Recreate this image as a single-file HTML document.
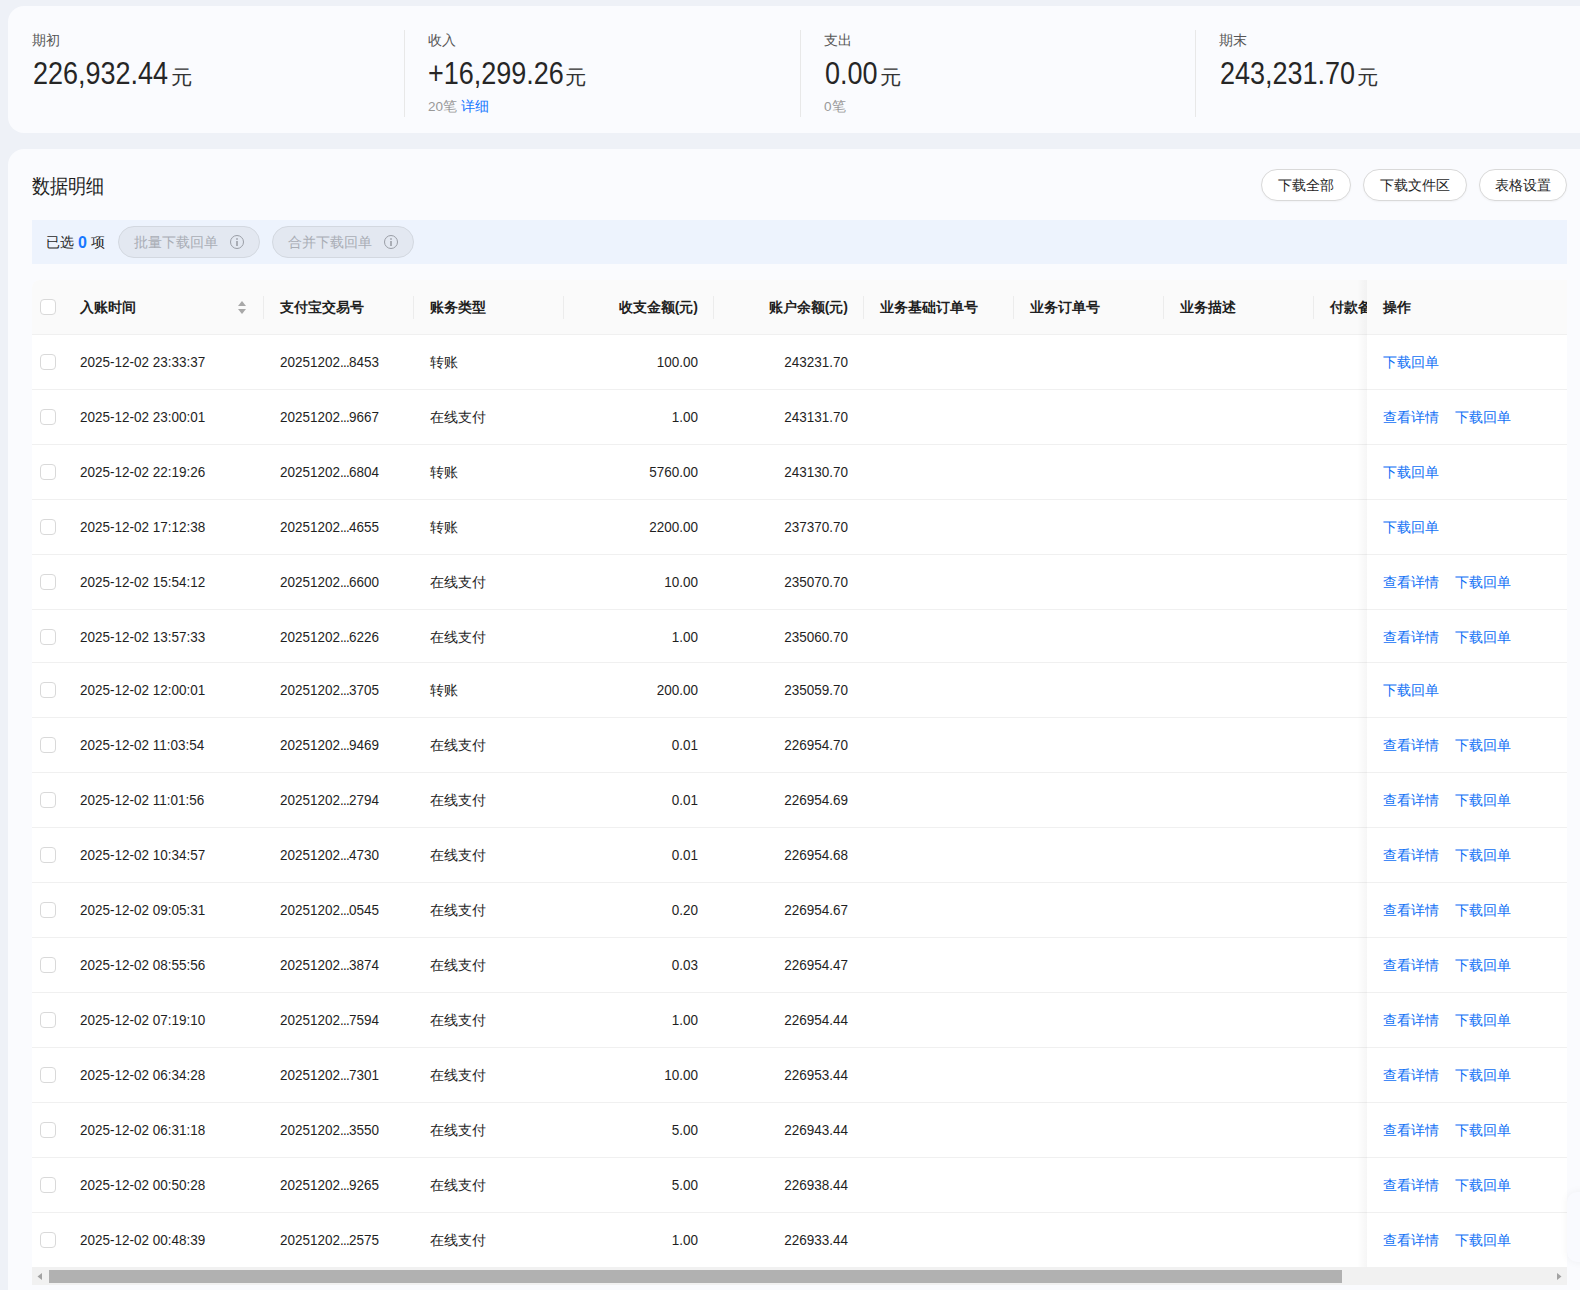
<!DOCTYPE html><html><head><meta charset="utf-8"><title>数据明细</title><style>
*{margin:0;padding:0;box-sizing:border-box}
html,body{width:1580px;height:1290px;overflow:hidden}
body{background:#eef1f7;font-family:"Liberation Sans",sans-serif;color:#1f1f1f;position:relative}
.abs{position:absolute}
.card{position:absolute;background:#fafbfe;border-radius:16px}
.lbl{position:absolute;font-size:13.5px;color:#555;line-height:16px;white-space:nowrap}
.num{position:absolute;font-size:31px;line-height:30px;color:#262626;white-space:nowrap;transform:scaleX(0.871);transform-origin:0 0}
.yuan{position:absolute;font-size:20px;line-height:20px;color:#333;transform:scaleX(1.07);transform-origin:0 0}
.sub{position:absolute;font-size:13.5px;line-height:16px;color:#999;white-space:nowrap}
.sub b{font-weight:normal;color:#1677ff}
.vdiv{position:absolute;width:1px;background:#e8e8e8;top:30px;height:87px}
.btn{position:absolute;top:169px;height:32px;border:1px solid #d9d9d9;border-radius:16px;background:#fff;font-size:14px;line-height:30px;text-align:center;color:#1f1f1f;box-shadow:0 1px 2px rgba(0,0,0,0.04)}
.selbar{position:absolute;left:32px;top:220px;width:1535px;height:44px;background:#edf3fd}
.pill{position:absolute;top:226px;height:32px;border:1px solid #d3d8e0;border-radius:16px;background:#e3e8f1;font-size:14px;line-height:30px;color:#a9adb5;padding-left:15px;white-space:nowrap}
.info{position:absolute;top:8px;width:14px;height:14px;border:1.3px solid #9a9ea6;border-radius:50%}
.info:before{content:"";position:absolute;left:5.2px;top:2.2px;width:1.6px;height:1.6px;background:#a9adb5;border-radius:1px}
.info:after{content:"";position:absolute;left:5.2px;top:5px;width:1.6px;height:5px;background:#a9adb5}
.tbl{position:absolute;left:32px;top:280px;width:1535px;height:987px;background:#fff;border-radius:8px 0 0 0;overflow:hidden}
.th{position:absolute;left:0;top:0;width:1535px;height:55px;background:#fafafa;border-bottom:1px solid #f0f0f0}
.hd{position:absolute;top:19px;font-size:14px;line-height:16px;font-weight:bold;color:#1f1f1f;white-space:nowrap}
.sep{position:absolute;top:16px;width:1px;height:23px;background:#ececec}
.rl{position:absolute;left:0;width:1535px;height:1px;background:#f0f0f0}
.cb{position:absolute;left:8px;width:16px;height:16px;border:1px solid #d9d9d9;border-radius:4px;background:#fff}
.td{position:absolute;font-size:13.5px;line-height:16px;margin-top:0.5px;transform:scaleY(1.07);transform-origin:0 3px;color:#1f1f1f;white-space:nowrap}
.tdc{position:absolute;font-size:14px;line-height:16px;color:#1f1f1f;white-space:nowrap}
.r{text-align:right}
.op{position:absolute;font-size:14px;line-height:16px;color:#0f6ff5;white-space:nowrap}
.fix{position:absolute;left:1335px;top:0;width:200px;height:987px}
.shadow{position:absolute;left:1325px;top:0;width:10px;height:987px;background:linear-gradient(to right,rgba(0,0,0,0),rgba(0,0,0,0.035))}
.sb{position:absolute;left:32px;top:1267px;width:1535px;height:18px;background:#f1f1f1}
.thumb{position:absolute;left:17px;top:3px;width:1293px;height:13px;background:#b1b1b1}
</style></head><body>
<div class="card" style="left:8px;top:6px;width:1586px;height:127px"></div>
<div class="lbl" style="left:32px;top:33px">期初</div>
<div class="num" style="left:32.5px;top:59px">226,932.44</div>
<div class="yuan" style="left:171px;top:67px">元</div>
<div class="vdiv" style="left:404px"></div>
<div class="lbl" style="left:428px;top:33px">收入</div>
<div class="num" style="left:427.5px;top:59px">+16,299.26</div>
<div class="yuan" style="left:565px;top:67px">元</div>
<div class="sub" style="left:428px;top:99px">20笔 <b>详细</b></div>
<div class="vdiv" style="left:800px"></div>
<div class="lbl" style="left:824px;top:33px">支出</div>
<div class="num" style="left:824.5px;top:59px">0.00</div>
<div class="yuan" style="left:880px;top:67px">元</div>
<div class="sub" style="left:824px;top:99px">0笔</div>
<div class="vdiv" style="left:1195px"></div>
<div class="lbl" style="left:1219px;top:33px">期末</div>
<div class="num" style="left:1219.5px;top:59px">243,231.70</div>
<div class="yuan" style="left:1357px;top:67px">元</div>
<div class="card" style="left:8px;top:149px;width:1586px;height:1160px"></div>
<div class="abs" style="left:32px;top:175px;font-size:18px;line-height:20px;color:#1f1f1f;transform:scaleY(1.1);transform-origin:0 0">数据明细</div>
<div class="btn" style="left:1261px;width:90px">下载全部</div>
<div class="btn" style="left:1363px;width:104px">下载文件区</div>
<div class="btn" style="left:1479px;width:88px">表格设置</div>
<div class="selbar"></div>
<div class="abs" style="left:46px;top:234px;font-size:14px;line-height:16px;color:#1f1f1f;white-space:nowrap">已选 <span style="color:#1677ff;font-weight:bold;font-size:16px;position:relative;top:0.5px">0</span> 项</div>
<div class="pill" style="left:118px;width:142px">批量下载回单<span class="info" style="left:111px"></span></div>
<div class="pill" style="left:272px;width:142px">合并下载回单<span class="info" style="left:111px"></span></div>
<div class="tbl">
<div class="th">
<div class="cb" style="top:19px"></div>
<div class="hd" style="left:48px">入账时间</div>
<svg class="abs" style="left:206px;top:20px" width="9" height="15" viewBox="0 0 9 15"><path d="M4 1L8 6H0Z" fill="#a8a8a8"/><path d="M4 14L8 9H0Z" fill="#a8a8a8"/></svg>
<div class="sep" style="left:231px"></div>
<div class="sep" style="left:381px"></div>
<div class="sep" style="left:531px"></div>
<div class="sep" style="left:681px"></div>
<div class="sep" style="left:831px"></div>
<div class="sep" style="left:981px"></div>
<div class="sep" style="left:1131px"></div>
<div class="sep" style="left:1281px"></div>
<div class="hd" style="left:248px">支付宝交易号</div>
<div class="hd" style="left:398px">账务类型</div>
<div class="hd r" style="left:516px;width:150px">收支金额(元)</div>
<div class="hd r" style="left:666px;width:150px">账户余额(元)</div>
<div class="hd" style="left:848px">业务基础订单号</div>
<div class="hd" style="left:998px">业务订单号</div>
<div class="hd" style="left:1148px">业务描述</div>
<div class="hd" style="left:1298px">付款备注</div>
</div>
<div class="cb" style="top:74px"></div>
<div class="td" style="left:48px;top:73.5px">2025-12-02 23:33:37</div>
<div class="td" style="left:248px;top:73.5px">20251202<span style="letter-spacing:-0.8px">...</span>8453</div>
<div class="tdc" style="left:398px;top:73.5px">转账</div>
<div class="td r" style="left:516px;width:150px;top:73.5px">100.00</div>
<div class="td r" style="left:666px;width:150px;top:73.5px">243231.70</div>
<div class="rl" style="top:109px"></div>
<div class="cb" style="top:129px"></div>
<div class="td" style="left:48px;top:128.5px">2025-12-02 23:00:01</div>
<div class="td" style="left:248px;top:128.5px">20251202<span style="letter-spacing:-0.8px">...</span>9667</div>
<div class="tdc" style="left:398px;top:128.5px">在线支付</div>
<div class="td r" style="left:516px;width:150px;top:128.5px">1.00</div>
<div class="td r" style="left:666px;width:150px;top:128.5px">243131.70</div>
<div class="rl" style="top:164px"></div>
<div class="cb" style="top:184px"></div>
<div class="td" style="left:48px;top:183.5px">2025-12-02 22:19:26</div>
<div class="td" style="left:248px;top:183.5px">20251202<span style="letter-spacing:-0.8px">...</span>6804</div>
<div class="tdc" style="left:398px;top:183.5px">转账</div>
<div class="td r" style="left:516px;width:150px;top:183.5px">5760.00</div>
<div class="td r" style="left:666px;width:150px;top:183.5px">243130.70</div>
<div class="rl" style="top:219px"></div>
<div class="cb" style="top:239px"></div>
<div class="td" style="left:48px;top:238.5px">2025-12-02 17:12:38</div>
<div class="td" style="left:248px;top:238.5px">20251202<span style="letter-spacing:-0.8px">...</span>4655</div>
<div class="tdc" style="left:398px;top:238.5px">转账</div>
<div class="td r" style="left:516px;width:150px;top:238.5px">2200.00</div>
<div class="td r" style="left:666px;width:150px;top:238.5px">237370.70</div>
<div class="rl" style="top:274px"></div>
<div class="cb" style="top:294px"></div>
<div class="td" style="left:48px;top:293.5px">2025-12-02 15:54:12</div>
<div class="td" style="left:248px;top:293.5px">20251202<span style="letter-spacing:-0.8px">...</span>6600</div>
<div class="tdc" style="left:398px;top:293.5px">在线支付</div>
<div class="td r" style="left:516px;width:150px;top:293.5px">10.00</div>
<div class="td r" style="left:666px;width:150px;top:293.5px">235070.70</div>
<div class="rl" style="top:329px"></div>
<div class="cb" style="top:349px"></div>
<div class="td" style="left:48px;top:348.5px">2025-12-02 13:57:33</div>
<div class="td" style="left:248px;top:348.5px">20251202<span style="letter-spacing:-0.8px">...</span>6226</div>
<div class="tdc" style="left:398px;top:348.5px">在线支付</div>
<div class="td r" style="left:516px;width:150px;top:348.5px">1.00</div>
<div class="td r" style="left:666px;width:150px;top:348.5px">235060.70</div>
<div class="rl" style="top:382px"></div>
<div class="cb" style="top:402px"></div>
<div class="td" style="left:48px;top:401.5px">2025-12-02 12:00:01</div>
<div class="td" style="left:248px;top:401.5px">20251202<span style="letter-spacing:-0.8px">...</span>3705</div>
<div class="tdc" style="left:398px;top:401.5px">转账</div>
<div class="td r" style="left:516px;width:150px;top:401.5px">200.00</div>
<div class="td r" style="left:666px;width:150px;top:401.5px">235059.70</div>
<div class="rl" style="top:437px"></div>
<div class="cb" style="top:457px"></div>
<div class="td" style="left:48px;top:456.5px">2025-12-02 11:03:54</div>
<div class="td" style="left:248px;top:456.5px">20251202<span style="letter-spacing:-0.8px">...</span>9469</div>
<div class="tdc" style="left:398px;top:456.5px">在线支付</div>
<div class="td r" style="left:516px;width:150px;top:456.5px">0.01</div>
<div class="td r" style="left:666px;width:150px;top:456.5px">226954.70</div>
<div class="rl" style="top:492px"></div>
<div class="cb" style="top:512px"></div>
<div class="td" style="left:48px;top:511.5px">2025-12-02 11:01:56</div>
<div class="td" style="left:248px;top:511.5px">20251202<span style="letter-spacing:-0.8px">...</span>2794</div>
<div class="tdc" style="left:398px;top:511.5px">在线支付</div>
<div class="td r" style="left:516px;width:150px;top:511.5px">0.01</div>
<div class="td r" style="left:666px;width:150px;top:511.5px">226954.69</div>
<div class="rl" style="top:547px"></div>
<div class="cb" style="top:567px"></div>
<div class="td" style="left:48px;top:566.5px">2025-12-02 10:34:57</div>
<div class="td" style="left:248px;top:566.5px">20251202<span style="letter-spacing:-0.8px">...</span>4730</div>
<div class="tdc" style="left:398px;top:566.5px">在线支付</div>
<div class="td r" style="left:516px;width:150px;top:566.5px">0.01</div>
<div class="td r" style="left:666px;width:150px;top:566.5px">226954.68</div>
<div class="rl" style="top:602px"></div>
<div class="cb" style="top:622px"></div>
<div class="td" style="left:48px;top:621.5px">2025-12-02 09:05:31</div>
<div class="td" style="left:248px;top:621.5px">20251202<span style="letter-spacing:-0.8px">...</span>0545</div>
<div class="tdc" style="left:398px;top:621.5px">在线支付</div>
<div class="td r" style="left:516px;width:150px;top:621.5px">0.20</div>
<div class="td r" style="left:666px;width:150px;top:621.5px">226954.67</div>
<div class="rl" style="top:657px"></div>
<div class="cb" style="top:677px"></div>
<div class="td" style="left:48px;top:676.5px">2025-12-02 08:55:56</div>
<div class="td" style="left:248px;top:676.5px">20251202<span style="letter-spacing:-0.8px">...</span>3874</div>
<div class="tdc" style="left:398px;top:676.5px">在线支付</div>
<div class="td r" style="left:516px;width:150px;top:676.5px">0.03</div>
<div class="td r" style="left:666px;width:150px;top:676.5px">226954.47</div>
<div class="rl" style="top:712px"></div>
<div class="cb" style="top:732px"></div>
<div class="td" style="left:48px;top:731.5px">2025-12-02 07:19:10</div>
<div class="td" style="left:248px;top:731.5px">20251202<span style="letter-spacing:-0.8px">...</span>7594</div>
<div class="tdc" style="left:398px;top:731.5px">在线支付</div>
<div class="td r" style="left:516px;width:150px;top:731.5px">1.00</div>
<div class="td r" style="left:666px;width:150px;top:731.5px">226954.44</div>
<div class="rl" style="top:767px"></div>
<div class="cb" style="top:787px"></div>
<div class="td" style="left:48px;top:786.5px">2025-12-02 06:34:28</div>
<div class="td" style="left:248px;top:786.5px">20251202<span style="letter-spacing:-0.8px">...</span>7301</div>
<div class="tdc" style="left:398px;top:786.5px">在线支付</div>
<div class="td r" style="left:516px;width:150px;top:786.5px">10.00</div>
<div class="td r" style="left:666px;width:150px;top:786.5px">226953.44</div>
<div class="rl" style="top:822px"></div>
<div class="cb" style="top:842px"></div>
<div class="td" style="left:48px;top:841.5px">2025-12-02 06:31:18</div>
<div class="td" style="left:248px;top:841.5px">20251202<span style="letter-spacing:-0.8px">...</span>3550</div>
<div class="tdc" style="left:398px;top:841.5px">在线支付</div>
<div class="td r" style="left:516px;width:150px;top:841.5px">5.00</div>
<div class="td r" style="left:666px;width:150px;top:841.5px">226943.44</div>
<div class="rl" style="top:877px"></div>
<div class="cb" style="top:897px"></div>
<div class="td" style="left:48px;top:896.5px">2025-12-02 00:50:28</div>
<div class="td" style="left:248px;top:896.5px">20251202<span style="letter-spacing:-0.8px">...</span>9265</div>
<div class="tdc" style="left:398px;top:896.5px">在线支付</div>
<div class="td r" style="left:516px;width:150px;top:896.5px">5.00</div>
<div class="td r" style="left:666px;width:150px;top:896.5px">226938.44</div>
<div class="rl" style="top:932px"></div>
<div class="cb" style="top:952px"></div>
<div class="td" style="left:48px;top:951.5px">2025-12-02 00:48:39</div>
<div class="td" style="left:248px;top:951.5px">20251202<span style="letter-spacing:-0.8px">...</span>2575</div>
<div class="tdc" style="left:398px;top:951.5px">在线支付</div>
<div class="td r" style="left:516px;width:150px;top:951.5px">1.00</div>
<div class="td r" style="left:666px;width:150px;top:951.5px">226933.44</div>
<div class="shadow"></div>
<div class="fix">
<div style="position:absolute;left:0;top:0;width:200px;height:55px;background:#fafafa;border-bottom:1px solid #f0f0f0"></div>
<div style="position:absolute;left:0;top:55px;width:200px;height:932px;background:#fff"></div>
<div class="hd" style="left:16px">操作</div>
<div class="op" style="left:16px;top:73.5px">下载回单</div>
<div class="rl" style="top:109px;width:200px"></div>
<div class="op" style="left:16px;top:128.5px">查看详情</div><div class="op" style="left:88px;top:128.5px">下载回单</div>
<div class="rl" style="top:164px;width:200px"></div>
<div class="op" style="left:16px;top:183.5px">下载回单</div>
<div class="rl" style="top:219px;width:200px"></div>
<div class="op" style="left:16px;top:238.5px">下载回单</div>
<div class="rl" style="top:274px;width:200px"></div>
<div class="op" style="left:16px;top:293.5px">查看详情</div><div class="op" style="left:88px;top:293.5px">下载回单</div>
<div class="rl" style="top:329px;width:200px"></div>
<div class="op" style="left:16px;top:348.5px">查看详情</div><div class="op" style="left:88px;top:348.5px">下载回单</div>
<div class="rl" style="top:382px;width:200px"></div>
<div class="op" style="left:16px;top:401.5px">下载回单</div>
<div class="rl" style="top:437px;width:200px"></div>
<div class="op" style="left:16px;top:456.5px">查看详情</div><div class="op" style="left:88px;top:456.5px">下载回单</div>
<div class="rl" style="top:492px;width:200px"></div>
<div class="op" style="left:16px;top:511.5px">查看详情</div><div class="op" style="left:88px;top:511.5px">下载回单</div>
<div class="rl" style="top:547px;width:200px"></div>
<div class="op" style="left:16px;top:566.5px">查看详情</div><div class="op" style="left:88px;top:566.5px">下载回单</div>
<div class="rl" style="top:602px;width:200px"></div>
<div class="op" style="left:16px;top:621.5px">查看详情</div><div class="op" style="left:88px;top:621.5px">下载回单</div>
<div class="rl" style="top:657px;width:200px"></div>
<div class="op" style="left:16px;top:676.5px">查看详情</div><div class="op" style="left:88px;top:676.5px">下载回单</div>
<div class="rl" style="top:712px;width:200px"></div>
<div class="op" style="left:16px;top:731.5px">查看详情</div><div class="op" style="left:88px;top:731.5px">下载回单</div>
<div class="rl" style="top:767px;width:200px"></div>
<div class="op" style="left:16px;top:786.5px">查看详情</div><div class="op" style="left:88px;top:786.5px">下载回单</div>
<div class="rl" style="top:822px;width:200px"></div>
<div class="op" style="left:16px;top:841.5px">查看详情</div><div class="op" style="left:88px;top:841.5px">下载回单</div>
<div class="rl" style="top:877px;width:200px"></div>
<div class="op" style="left:16px;top:896.5px">查看详情</div><div class="op" style="left:88px;top:896.5px">下载回单</div>
<div class="rl" style="top:932px;width:200px"></div>
<div class="op" style="left:16px;top:951.5px">查看详情</div><div class="op" style="left:88px;top:951.5px">下载回单</div>
</div>
</div>
<div class="sb"><div class="thumb"></div>
<svg class="abs" style="left:5px;top:6px" width="6" height="7"><path d="M5 0V7L0.5 3.5Z" fill="#a3a3a3"/></svg>
<svg class="abs" style="left:1524px;top:6px" width="6" height="7"><path d="M1 0V7L5.5 3.5Z" fill="#a3a3a3"/></svg>
</div>
<div class="abs" style="left:1567px;top:1192px;width:40px;height:70px;background:#f9fafe;border-radius:10px;box-shadow:0 0 8px rgba(0,0,0,0.05)"></div>
</body></html>
